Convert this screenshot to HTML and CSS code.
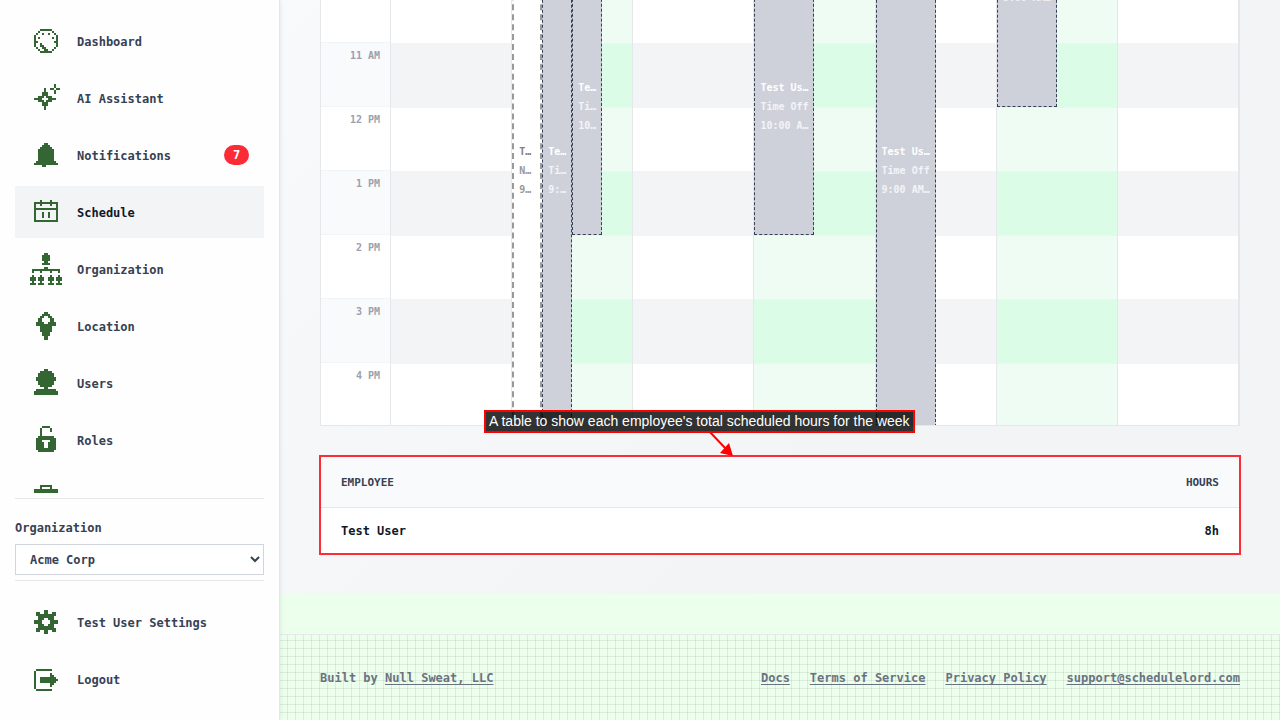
FILE: index.html
```html
<!DOCTYPE html>
<html lang="en">
<head>
	<meta charset="utf-8">
	<title>Schedule</title>
	<link rel="stylesheet" href="styles.css">
</head>
<body>
<div class="app">
	<aside class="sidebar">
		<nav class="nav">
			<a href="#" class="nav_item">
				<svg class="icon" viewBox="0 -.5 16 16"><path d="M5 2h6M4 3h1M11 3h1M3 4h1M6 4h1M9 4h1M12 4h1M2 5h1M13 5h1M2 6h1M4 6h1M11 6h1M13 6h1M2 7h1M13 7h1M2 8h2M12 8h2M2 9h1M5 9h1M13 9h1M2 10h1M5 10h2M13 10h1M3 11h1M6 11h2M12 11h1M4 12h1M7 12h2M11 12h1M5 13h6"/></svg>
				<span class="label">Dashboard</span>
			</a>
			<a href="#" class="nav_item">
				<svg class="icon" viewBox="0 -.5 16 16"><path d="M12 1h1M12 2h1M7 3h1M10 3h2M13 3h2M7 4h1M12 4h1M6 5h3M12 5h1M6 6h3M4 7h3M8 7h3M2 8h4M9 8h4M4 9h3M8 9h3M6 10h3M6 11h3M7 12h1M7 13h1"/></svg>
				<span class="label">AI Assistant</span>
			</a>
			<a href="#" class="nav_item">
				<svg class="icon" viewBox="0 -.5 16 16"><path d="M7 2h2M6 3h4M5 4h6M4 5h8M4 6h8M4 7h8M4 8h8M4 9h8M4 10h8M3 11h10M2 12h12M6 13h2"/></svg>
				<span class="label">Notifications</span>
				<span class="badge">7</span>
			</a>
			<a href="#" class="nav_item active">
				<svg class="icon" viewBox="0 -.5 16 16"><path d="M5 2h1M10 2h1M2 3h12M2 4h1M5 4h1M10 4h1M13 4h1M2 5h1M13 5h1M2 6h12M2 7h1M13 7h1M2 8h1M6 8h1M9 8h1M13 8h1M2 9h1M6 9h1M9 9h1M13 9h1M2 10h1M6 10h1M9 10h1M13 10h1M2 11h1M13 11h1M2 12h12"/></svg>
				<span class="label">Schedule</span>
			</a>
			<a href="#" class="nav_item">
				<svg class="icon" viewBox="0 -.5 16 16"><path d="M7 0h2M6 1h4M6 2h4M6 3h4M7 4h2M6 5h4M7 7h2M1 8h14M1 9h1M5 9h1M10 9h1M14 9h1M1 11h1M5 11h1M10 11h1M14 11h1M0 12h3M4 12h3M9 12h3M13 12h3M0 13h3M4 13h3M9 13h3M13 13h3M1 14h1M5 14h1M10 14h1M14 14h1M0 15h3M4 15h3M9 15h3M13 15h3"/></svg>
				<span class="label">Organization</span>
			</a>
			<a href="#" class="nav_item">
				<svg class="icon" viewBox="0 -.5 16 16"><path d="M7 1h2M6 2h4M5 3h2M9 3h2M4 4h2M10 4h2M4 5h2M10 5h2M3 6h4M9 6h4M3 7h10M5 8h6M5 9h6M5 10h6M6 11h4M6 12h4M7 13h2M7 14h2"/></svg>
				<span class="label">Location</span>
			</a>
			<a href="#" class="nav_item">
				<svg class="icon" viewBox="0 -.5 16 16"><path d="M7 1h2M5 2h6M4 3h8M4 4h8M3 5h10M3 6h10M4 7h8M4 8h8M5 9h6M7 10h2M3 11h10M2 12h12M2 13h12"/></svg>
				<span class="label">Users</span>
			</a>
			<a href="#" class="nav_item">
				<svg class="icon" viewBox="0 -.5 16 16"><path d="M6 1h4M5 2h1M10 2h1M5 3h1M10 3h1M5 4h1M5 5h1M4 6h8M3 7h10M3 8h3M10 8h3M3 9h4M9 9h4M3 10h4M9 10h4M3 11h4M9 11h4M3 12h10M4 13h8"/></svg>
				<span class="label">Roles</span>
			</a>
			<a href="#" class="nav_item">
				<svg class="icon" viewBox="0 -.5 16 16"><path d="M5 2h6M5 3h1M10 3h1M2 4h12M2 5h12M2 6h12M2 7h12M2 8h12M2 9h12M2 10h12"/></svg>
			</a>
		</nav>
		<div class="sidebar_bottom">
			<div class="org">
				<label for="org">Organization</label>
				<select id="org">
					<option>Acme Corp</option>
				</select>
			</div>
			<div class="account">
				<a href="#" class="nav_item">
					<svg class="icon" viewBox="0 -.5 16 16"><path d="M7 2h2M3 3h2M7 3h2M11 3h2M3 4h10M4 5h8M4 6h3M9 6h3M2 7h4M10 7h4M2 8h4M10 8h4M4 9h3M9 9h3M4 10h8M3 11h10M3 12h2M7 12h2M11 12h2M7 13h2"/></svg>
					<span class="label">Test User Settings</span>
				</a>
				<a href="#" class="nav_item">
					<svg class="icon" viewBox="0 -.5 16 16"><path d="M3 3h8M2 4h1M2 5h1M10 5h1M2 6h1M10 6h2M2 7h1M5 7h8M2 8h1M5 8h9M2 9h1M5 9h8M2 10h1M10 10h2M2 11h1M10 11h1M2 12h1M3 13h8"/></svg>
					<span class="label">Logout</span>
				</a>
			</div>
		</div>
	</aside>

	<div class="page">
		<main class="content">
			<div class="calendar">
				<div class="times">
					<div class="time">8 AM</div>
					<div class="time">9 AM</div>
					<div class="time">10 AM</div>
					<div class="time">11 AM</div>
					<div class="time">12 PM</div>
					<div class="time">1 PM</div>
					<div class="time">2 PM</div>
					<div class="time">3 PM</div>
					<div class="time">4 PM</div>
				</div>
				<div class="day"></div>
				<div class="day available">
					<div class="event shift first from_9 hours_8"><b>Test User</b><span>Night</span><span>9:00 AM</span></div>
					<div class="event second from_9 hours_8"><b>Test User</b><span>Time Off</span><span>9:00 AM</span></div>
					<div class="event third from_10 hours_4"><b>Test User</b><span>Time Off</span><span>10:00 AM</span></div>
				</div>
				<div class="day"></div>
				<div class="day available">
					<div class="event half from_10 hours_4"><b>Test User</b><span>Time Off</span><span>10:00 AM - 2:00 PM</span></div>
				</div>
				<div class="day">
					<div class="event half from_9 hours_8"><b>Test User</b><span>Time Off</span><span>9:00 AM - 5:00 PM</span></div>
				</div>
				<div class="day available">
					<div class="event half from_8 hours_4"><b>Test User</b><span>Time Off</span><span>8:00 AM - 12:00 PM</span></div>
				</div>
				<div class="day"></div>
			</div>

			<div class="summary">
				<table>
					<thead>
						<tr><th>EMPLOYEE</th><th>HOURS</th></tr>
					</thead>
					<tbody>
						<tr><td>Test User</td><td>8h</td></tr>
					</tbody>
				</table>
				<div class="callout">
					A table to show each employee's total scheduled hours for the week
					<svg class="arrow" viewBox="0 0 28 26"><path d="M1 0L19 19" stroke="#f00" stroke-width="2"/><path d="M25 25L12 22L21 12Z" fill="#f00"/></svg>
				</div>
			</div>
		</main>

		<footer class="footer">
			<div>Built by <a href="#">Null Sweat, LLC</a></div>
			<div class="links">
				<a href="#">Docs</a>
				<a href="#">Terms of Service</a>
				<a href="#">Privacy Policy</a>
				<a href="#">support@schedulelord.com</a>
			</div>
		</footer>
	</div>
</div>
</body>
</html>
```
FILE: styles.css
```css
* {
	box-sizing: border-box;
}
body {
	margin: 0;
	font: bold 12px/26px "DejaVu Sans Mono", monospace;
	color: #364153;
	background: #ecfeec;
}
.app {
	display: flex;
	height: 100vh;
	overflow: hidden;
}

/* sidebar */
.sidebar {
	display: flex;
	flex-direction: column;
	width: 280px;
	flex-shrink: 0;
	padding: 15px;
	background: #fefefe;
	border-right: 1px solid #e5e7eb;
	box-shadow: 0 0 4px rgba(0, 0, 0, 0.1);
	z-index: 1;
}
.nav {
	display: flex;
	flex-direction: column;
	gap: 5px;
	flex: 1;
	min-height: 0;
	overflow: hidden;
	margin-bottom: 5px;
}
.nav_item {
	display: flex;
	flex-shrink: 0;
	align-items: center;
	gap: 15px;
	height: 52px;
	padding: 0 15px;
	color: #364153;
	text-decoration: none;
}
.nav_item.active {
	background: #f3f4f6;
	color: #101828;
}
.label {
	padding-top: 2px;
}
.icon {
	width: 32px;
	height: 32px;
	fill: none;
	stroke: #336633;
	stroke-width: 1;
	shape-rendering: crispEdges;
}
.badge {
	margin-left: auto;
	width: 25px;
	border-radius: 10px;
	background: #fb2c36;
	color: #fff;
	font-size: 12px;
	line-height: 20px;
	text-align: center;
}
.org {
	display: flex;
	flex-direction: column;
	gap: 3px;
	padding: 16px 0 5px;
	border-top: 1px solid #e5e7eb;
}
.org select {
	height: 31px;
	padding: 0 10px;
	border: 1px solid #d1d5dc;
	border-radius: 0;
	background: #fff;
	color: #364153;
	font: inherit;
}
.account {
	display: flex;
	flex-direction: column;
	gap: 5px;
	padding-top: 15px;
	border-top: 1px solid #e5e7eb;
}

/* page */
.page {
	display: flex;
	flex-direction: column;
	flex: 1;
	min-width: 0;
}
/* the week is scrolled down to the late morning */
.content {
	flex-shrink: 0;
	margin: -149px 0 40px;
	padding: 0 40px 40px;
	background: linear-gradient(135deg, #f9fafb, #f3f4f6 70%);
}

/* calendar */
.calendar {
	display: grid;
	grid-template-columns: 70px repeat(7, 1fr);
	height: 575px;
	border: 1px solid #e5e7eb;
	border-top: 0;
	overflow: hidden;
	background: #fff;
}
.times {
	border-right: 1px solid #e5e7eb;
}
.time {
	height: 64px;
	padding-right: 10px;
	border-bottom: 1px solid #f3f4f6;
	color: #99a1af;
	font-size: 10px;
	line-height: 26px;
	text-align: right;
}
.time:nth-child(even) {
	background: #f9fafb;
}
.day {
	position: relative;
	min-width: 0;
	border-right: 1px solid #e5e7eb;
	background: repeating-linear-gradient(#f3f4f6 0 1px, #fff 1px 64px, #f3f4f6 64px 128px);
}
.day.available {
	background: repeating-linear-gradient(#ebf6ef 0 1px, #effcf4 1px 64px, #ebf6ef 64px 65px, #dbfce7 65px 128px);
}

.event {
	position: absolute;
	display: flex;
	flex-direction: column;
	justify-content: center;
	gap: 1px;
	padding: 0 4px 0 5px;
	border: 1px dashed #364153;
	background: #ced1da;
	color: #f3f4f6;
	font-size: 10px;
	line-height: 18px;
}
.event b, .event span {
	overflow: hidden;
	text-overflow: ellipsis;
	white-space: nowrap;
}
.event b {
	color: #fff;
}
.event.shift {
	border: 2px dashed #999;
	background: #fff;
	color: #999;
}
.event.shift b {
	color: #808080;
}
.first {
	left: 0;
	width: 25%;
}
.second {
	left: 25%;
	width: 25%;
}
.third {
	left: 50%;
	width: 25%;
}
.half {
	left: 0;
	width: 50%;
}
.from_8 {
	top: 0;
}
.from_9 {
	top: 64px;
}
.from_10 {
	top: 128px;
}
.hours_4 {
	height: 256px;
}
.hours_8 {
	height: 512px;
}

/* hours */
.summary {
	position: relative;
	margin-top: 30px;
	border: 1px solid #fb2c36;
	outline: 1px solid #fb2c36;
	background: #fff;
}
.summary table {
	width: 100%;
	border-collapse: collapse;
}
.summary th, .summary td {
	padding: 0 20px;
	text-align: left;
}
.summary th:last-child, .summary td:last-child {
	text-align: right;
}
.summary th {
	height: 50px;
	padding-top: 2px;
	background: #f9fafb;
	border-bottom: 1px solid #e5e7eb;
	font-size: 11px;
}
.summary td {
	height: 46px;
	padding-top: 2px;
	color: #101828;
}
.callout {
	position: absolute;
	left: 163px;
	bottom: 120px;
	padding: 0 3px;
	border: 2px solid #f00;
	background: rgba(0, 0, 0, 0.8);
	color: #fff;
	font: 14px/19px "Liberation Sans", Arial, sans-serif;
	white-space: nowrap;
}
.arrow {
	position: absolute;
	left: 222px;
	top: 100%;
	width: 28px;
	height: 26px;
}

/* footer */
.footer {
	display: flex;
	justify-content: space-between;
	flex: 1;
	padding: 30px 40px;
	border-top: 1px solid #e5e7eb;
	background: linear-gradient(rgba(0, 0, 0, 0.07) 1px, transparent 1px) 7px 5px / 8px 8px,
		linear-gradient(90deg, rgba(0, 0, 0, 0.07) 1px, transparent 1px) 7px 5px / 8px 8px;
	color: #6a7282;
}
.footer a {
	color: #6a7282;
	text-underline-offset: 2px;
}
.links {
	display: flex;
	gap: 20px;
}
```
